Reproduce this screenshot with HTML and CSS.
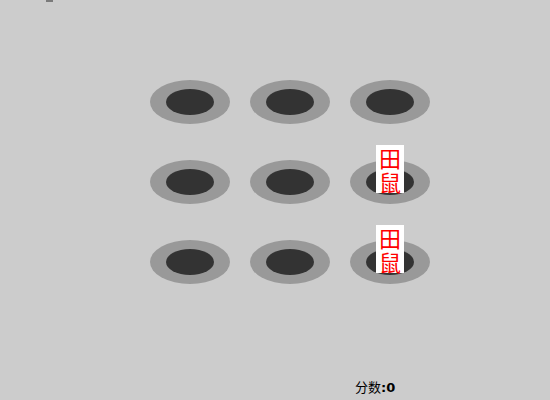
FILE: index.html
```html
<!DOCTYPE html>
<html>
<head>
<meta charset="utf-8">
<link rel="stylesheet" href="styles.css">
</head>
<body>
<div class="top-mark"></div>
<div class="board">
  <div class="cell"><div class="hole"><div class="pit"></div></div></div>
  <div class="cell"><div class="hole"><div class="pit"></div></div></div>
  <div class="cell"><div class="hole"><div class="pit"></div></div></div>
  <div class="cell"><div class="hole"><div class="pit"></div></div></div>
  <div class="cell"><div class="hole"><div class="pit"></div></div></div>
  <div class="cell"><div class="hole"><div class="pit"></div><div class="mole">田鼠</div></div></div>
  <div class="cell"><div class="hole"><div class="pit"></div></div></div>
  <div class="cell"><div class="hole"><div class="pit"></div></div></div>
  <div class="cell"><div class="hole"><div class="pit"></div><div class="mole">田鼠</div></div></div>
</div>
<div class="score">分数<b>:0</b></div>
</body>
</html>
```
FILE: styles.css
```css
html, body {
  margin: 0;
  padding: 0;
}
body {
  background: #cccccc;
  width: 550px;
  height: 400px;
  overflow: hidden;
  position: relative;
  font-family: "Noto Sans CJK SC", "DejaVu Sans", sans-serif;
}
.top-mark {
  position: absolute;
  left: 46px;
  top: 0;
  width: 7px;
  height: 2px;
  background: #7a7a7a;
}
.board {
  display: grid;
  grid-template-columns: repeat(3, 100px);
  grid-auto-rows: 80px;
  margin-left: 140px;
  padding-top: 80px;
}
.cell {
  display: flex;
  justify-content: center;
  align-items: flex-start;
}
.hole {
  position: relative;
  width: 80px;
  height: 44px;
  border-radius: 50%;
  background: #999999;
  display: flex;
  justify-content: center;
  align-items: center;
}
.pit {
  width: 48px;
  height: 26px;
  border-radius: 50%;
  background: #333333;
}
.mole {
  position: absolute;
  z-index: 2;
  left: 26px;
  top: -15px;
  width: 28px;
  height: 48px;
  background: #ffffff;
  color: #ff0000;
  font-family: "Noto Sans CJK SC", sans-serif;
  font-weight: 400;
  font-size: 22px;
  line-height: 24px;
  text-align: center;
  word-break: break-all;
}
.score {
  margin-left: 355px;
  margin-top: 59px;
  font-size: 13px;
  line-height: 16px;
  color: #000;
}
.score b {
  font-family: "DejaVu Sans", sans-serif;
  font-weight: bold;
}
```
